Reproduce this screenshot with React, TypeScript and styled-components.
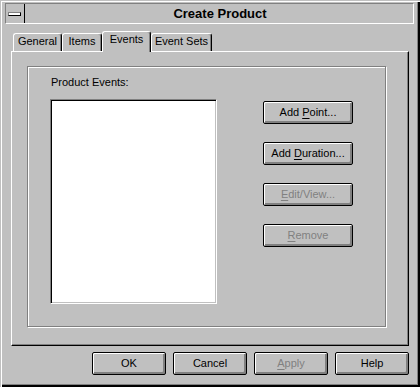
import React from "react";
import styled, { createGlobalStyle } from "styled-components";

const GlobalStyle = createGlobalStyle`
  html, body { margin: 0; padding: 0; background: #c0c0c0; }
  body { font-family: "Liberation Sans", Arial, sans-serif; overflow: hidden; }
  * { box-sizing: border-box; }
`;

const Window = styled.div`
  width: 420px;
  height: 387px;
  background: #c0c0c0;
  display: flex;
  flex-direction: column;
  box-shadow: inset 1px 1px 0 #c0c0c0, inset 2px 2px 0 #ffffff,
    inset -2px -2px 0 #000000, inset -3px -3px 0 #808080;
  font-size: 11px;
  color: #000;
`;

const TitleBar = styled.div`
  margin: 3px 6px 0 5px;
  height: 21px;
  display: flex;
  border-top: 1px solid #808080;
  border-left: 1px solid #808080;
  border-bottom: 1px solid #ffffff;
  border-right: 1px solid #ffffff;
`;

const SysMenu = styled.div`
  width: 19px;
  border-right: 1px solid #000;
  display: flex;
  align-items: center;
  padding-left: 2px;
  padding-top: 1px;
`;

const SysDash = styled.div`
  width: 13px;
  height: 4px;
  background: #ffffff;
  border: 1px solid #808080;
  border-bottom-color: #000;
  border-right-color: #000;
`;

const Title = styled.div`
  flex: 1;
  text-align: center;
  font-weight: bold;
  font-size: 13px;
  line-height: 19px;
  padding-left: 2px;
`;

const TabRow = styled.div`
  display: flex;
  align-items: flex-end;
  margin-top: 7px;
  padding-left: 13px;
  height: 20px;
`;

const Tab = styled.div<{ $w: number; $active?: boolean; $ml?: number }>`
  position: relative;
  z-index: ${(p) => (p.$active ? 2 : 1)};
  width: ${(p) => p.$w}px;
  height: ${(p) => (p.$active ? 21 : 18)}px;
  margin-bottom: ${(p) => (p.$active ? -1 : 0)}px;
  margin-left: ${(p) => p.$ml ?? 0}px;
  background: #c0c0c0;
  border-top: 1px solid #ffffff;
  border-left: 1px solid #ffffff;
  border-right: 1px solid #000000;
  border-radius: 3px 3px 0 0;
  box-shadow: inset -1px 0 0 #808080;
  text-align: center;
  line-height: 13px;
  padding-top: 1px;
  white-space: nowrap;
`;

const Panel = styled.div`
  margin: 0 11px;
  height: 295px;
  border-top: 1px solid #ffffff;
  border-left: 1px solid #ffffff;
  border-right: 1px solid #000000;
  border-bottom: 1px solid #000000;
  box-shadow: inset -1px -1px 0 #808080;
  padding: 14px 0 0 15px;
`;

const Group = styled.div`
  width: 359px;
  height: 261px;
  border: 1px solid #808080;
  box-shadow: inset 1px 1px 0 #ffffff, 1px 1px 0 #ffffff;
  padding: 9px 0 0 22px;
  display: flex;
  flex-direction: column;
`;

const Label = styled.div`
  line-height: 13px;
  height: 13px;
  margin-bottom: 10px;
  padding-left: 1px;
`;

const GroupBody = styled.div`
  display: flex;
  align-items: flex-start;
`;

const ListBox = styled.div`
  width: 167px;
  height: 205px;
  background: #ffffff;
  border: 1px solid;
  border-color: #808080 #ffffff #ffffff #808080;
  box-shadow: inset 1px 1px 0 #000000, inset -1px -1px 0 #c0c0c0;
`;

const ButtonColumn = styled.div`
  display: flex;
  flex-direction: column;
  gap: 18px;
  margin-left: 46px;
  margin-top: 2px;
`;

const Button = styled.div<{ $w: number; $disabled?: boolean }>`
  width: ${(p) => p.$w}px;
  height: 23px;
  border: 1px solid #000000;
  border-radius: 2px;
  background: #c0c0c0;
  box-shadow: inset 1px 1px 0 #ffffff, inset -1px -1px 0 #808080,
    inset -2px -2px 0 #808080;
  display: flex;
  align-items: center;
  justify-content: center;
  padding-bottom: 1px;
  color: ${(p) => (p.$disabled ? "#808080" : "#000000")};
  line-height: 13px;
  white-space: nowrap;
  u { text-decoration: underline; text-underline-offset: 2px; }
`;

const Footer = styled.div`
  display: flex;
  justify-content: flex-end;
  gap: 7px;
  margin-top: 6px;
  padding-right: 11px;
`;

export default function App() {
  return (
    <>
      <GlobalStyle />
      <Window>
        <TitleBar>
          <SysMenu>
            <SysDash />
          </SysMenu>
          <Title>Create Product</Title>
        </TitleBar>
        <TabRow>
          <Tab $w={49}>General</Tab>
          <Tab $w={40}>Items</Tab>
          <Tab $w={49} $active>
            Events
          </Tab>
          <Tab $w={61}>Event Sets</Tab>
        </TabRow>
        <Panel>
          <Group>
            <Label>Product Events:</Label>
            <GroupBody>
              <ListBox />
              <ButtonColumn>
                <Button $w={90}>
                  Add&nbsp;<u>P</u>oint...
                </Button>
                <Button $w={90}>
                  Add&nbsp;<u>D</u>uration...
                </Button>
                <Button $w={90} $disabled>
                  <u>E</u>dit/View...
                </Button>
                <Button $w={90} $disabled>
                  <u>R</u>emove
                </Button>
              </ButtonColumn>
            </GroupBody>
          </Group>
        </Panel>
        <Footer>
          <Button $w={74}>OK</Button>
          <Button $w={74}>Cancel</Button>
          <Button $w={74} $disabled>
            <u>A</u>pply
          </Button>
          <Button $w={74}>Help</Button>
        </Footer>
      </Window>
    </>
  );
}
